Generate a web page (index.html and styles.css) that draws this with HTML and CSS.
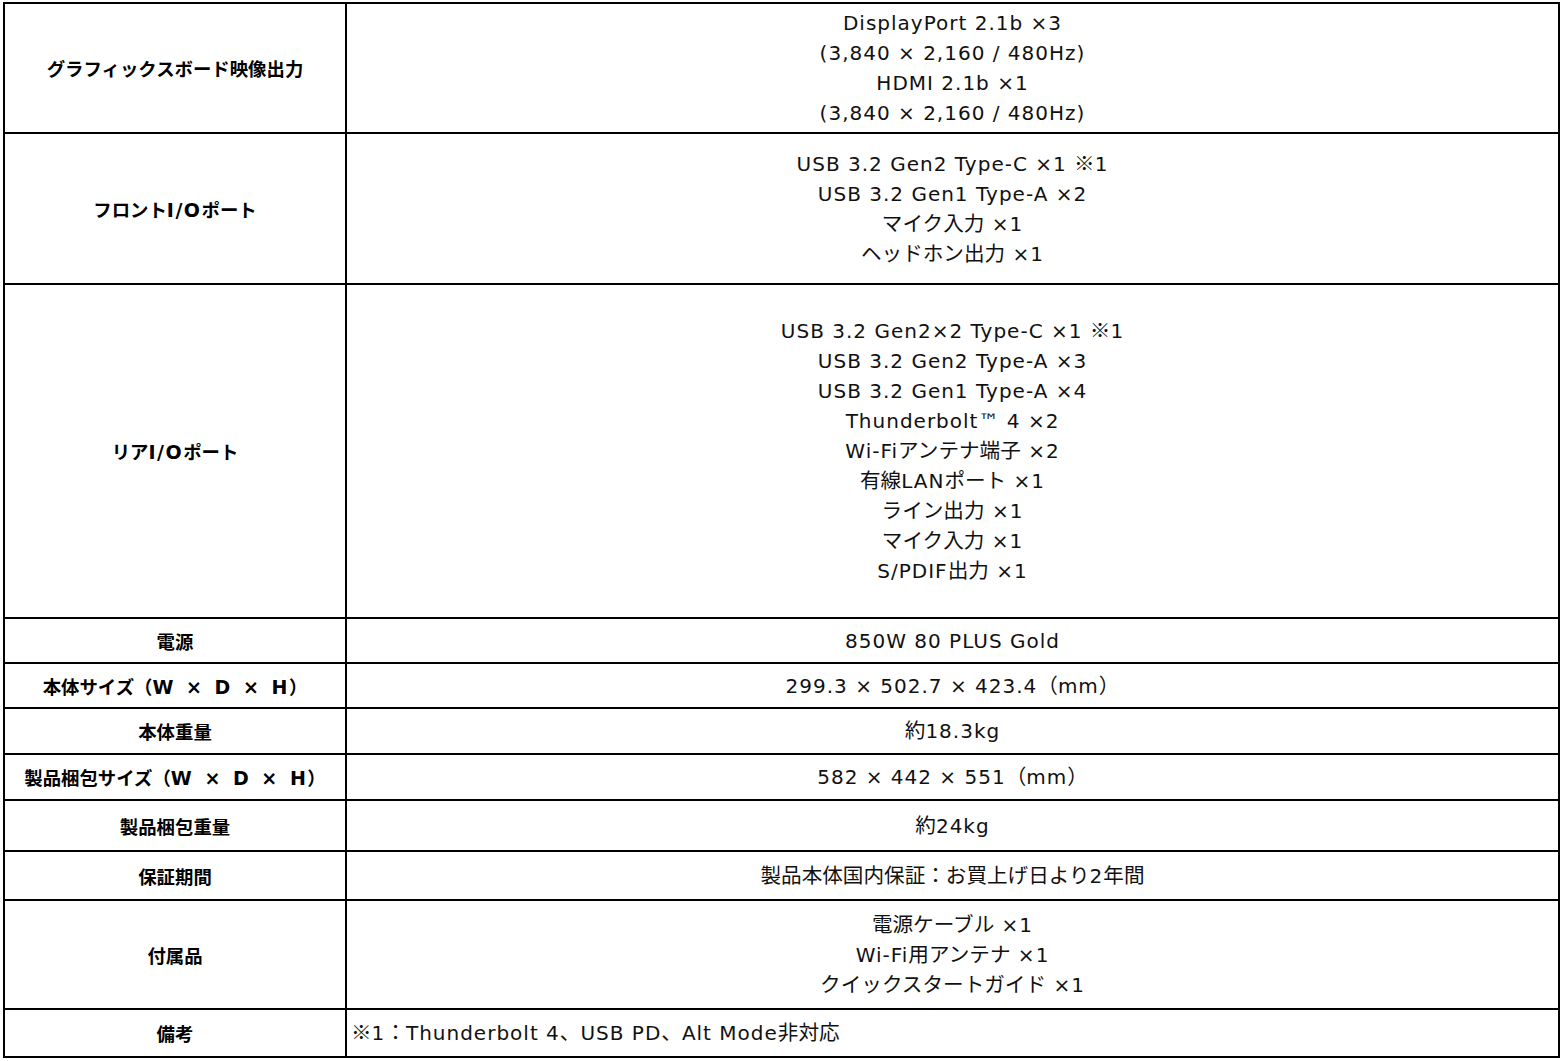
FILE: index.html
```html
<!DOCTYPE html>
<html lang="ja">
<head>
<meta charset="utf-8">
<title>仕様</title>
<link rel="stylesheet" href="styles.css">
</head>
<body>
<table class="spec">
  <colgroup><col class="c-head"><col class="c-val"></colgroup>
  <tr class="r1"><th>グラフィックスボード映像出力</th><td>DisplayPort 2.1b ×3<br>(3,840 × 2,160 / 480Hz)<br>HDMI 2.1b ×1<br>(3,840 × 2,160 / 480Hz)</td></tr>
  <tr class="r2"><th>フロント<span class="en">I/O</span>ポート</th><td>USB 3.2 Gen2 Type-C ×1 <span class="ja">※</span>1<br>USB 3.2 Gen1 Type-A ×2<br><span class="ja">マイク入力</span> ×1<br><span class="ja">ヘッドホン出力</span> ×1</td></tr>
  <tr class="r3"><th>リア<span class="en">I/O</span>ポート</th><td>USB 3.2 Gen2×2 Type-C ×1 <span class="ja">※</span>1<br>USB 3.2 Gen2 Type-A ×3<br>USB 3.2 Gen1 Type-A ×4<br>Thunderbolt™ 4 ×2<br>Wi-Fi<span class="ja">アンテナ端子</span> ×2<br><span class="ja">有線</span>LAN<span class="ja">ポート</span> ×1<br><span class="ja">ライン出力</span> ×1<br><span class="ja">マイク入力</span> ×1<br>S/PDIF<span class="ja">出力</span> ×1</td></tr>
  <tr class="r4"><th>電源</th><td>850W 80 PLUS Gold</td></tr>
  <tr class="r5"><th>本体サイズ（<span class="en">W × D × H</span>）</th><td>299.3 × 502.7 × 423.4<span class="ja">（</span>mm<span class="ja">）</span></td></tr>
  <tr class="r6"><th>本体重量</th><td><span class="ja">約</span>18.3kg</td></tr>
  <tr class="r7"><th>製品梱包サイズ（<span class="en">W × D × H</span>）</th><td>582 × 442 × 551<span class="ja">（</span>mm<span class="ja">）</span></td></tr>
  <tr class="r8"><th>製品梱包重量</th><td><span class="ja">約</span>24kg</td></tr>
  <tr class="r9"><th>保証期間</th><td><span class="ja">製品本体国内保証：お買上げ日より</span>2<span class="ja">年間</span></td></tr>
  <tr class="r10"><th>付属品</th><td><span class="ja">電源ケーブル</span> ×1<br>Wi-Fi<span class="ja">用アンテナ</span> ×1<br><span class="ja">クイックスタートガイド</span> ×1</td></tr>
  <tr class="r11"><th>備考</th><td class="left"><span class="ja">※</span>1<span class="ja">：</span>Thunderbolt 4<span class="ja">、</span>USB PD<span class="ja">、</span>Alt Mode<span class="ja">非対応</span></td></tr>
</table>
</body>
</html>
```
FILE: styles.css
```css
html, body {
  margin: 0;
  padding: 0;
  background: #fff;
}
body {
  padding: 2px 0 0 3px;
  color: #111;
}
.spec {
  border-collapse: collapse;
  width: 1557px;
  table-layout: fixed;
}
.c-head { width: 342px; }
.spec th, .spec td {
  border: 2px solid #000;
  padding: 0 4px;
  vertical-align: middle;
  text-align: center;
  line-height: 30px;
}
.spec th {
  font-family: "Noto Sans CJK JP", sans-serif;
  font-weight: bold;
  font-size: 18.4px;
  color: #000;
}
.spec th .en {
  font-family: "DejaVu Sans", sans-serif;
  font-size: 19px;
  letter-spacing: 1.5px;
  word-spacing: 3px;
  line-height: 1;
}
.spec td {
  font-family: "DejaVu Sans", "Noto Sans CJK JP", sans-serif;
  font-weight: normal;
  font-size: 20px;
  letter-spacing: 1px;
}
.spec td .ja {
  font-family: "Noto Sans CJK JP", sans-serif;
  font-size: 20.6px;
  letter-spacing: 0;
  line-height: 1;
}
.spec td.left { text-align: left; padding-left: 4px; }
.r1 { height: 130px; }
.r2 { height: 151px; }
.r3 { height: 334px; }
.r4 { height: 45px; }
.r5 { height: 45px; }
.r6 { height: 46px; }
.r7 { height: 46px; }
.r8 { height: 51px; }
.r9 { height: 49px; }
.r10 { height: 109px; }
.r11 { height: 48px; }
```
